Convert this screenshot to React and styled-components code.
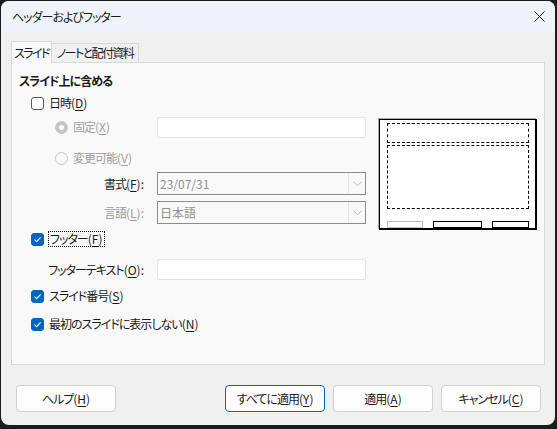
import React from 'react';
import styled, { createGlobalStyle } from 'styled-components';

/* Global ---------------------------*/
const GlobalStyle = createGlobalStyle`
    html, body {
        margin: 0;
        padding: 0;
        background: #1c1c1c;
    }
    body {
        width: 557px;
        height: 429px;
        overflow: hidden;
        font-family: "Noto Sans CJK JP", "Noto Sans", sans-serif;
        font-size: 12px;
        letter-spacing: -1px;
        color: #1b1b1b;
        font-feature-settings: "palt" 1;
    }
    u {
        text-underline-offset: 2px;
        text-decoration-thickness: 1px;
    }
`;

/* Small parts ---------------------------*/
const CheckMark = () => (
    <svg width="9" height="9" viewBox="0 0 9 9">
        <path d="M1.5 4.6 L3.6 6.6 L7.6 2.3" fill="none" stroke="#fff" strokeWidth="1.1" />
    </svg>
);

const CloseIcon = () => (
    <svg width="11" height="11" viewBox="0 0 11 11">
        <path d="M0.5 0.5 L10.5 10.5 M10.5 0.5 L0.5 10.5" stroke="#1b1b1b" strokeWidth="1" />
    </svg>
);

const Chevron = () => (
    <svg width="9" height="6" viewBox="0 0 9 6">
        <path d="M0.5 0.8 L4.5 4.8 L8.5 0.8" fill="none" stroke="#b8b8b8" strokeWidth="1" />
    </svg>
);

const Check = ({ checked }) => (
    <CheckBox $checked={checked}>{checked && <CheckMark />}</CheckBox>
);

const Key = ({ k }) => (
    <Paren>(<u>{k}</u>)</Paren>
);

const App = () => {
    return (
        <>
            <GlobalStyle />
            <Window>
                <TitleBar>
                    <span>ヘッダーおよびフッター</span>
                    <CloseIcon />
                </TitleBar>

                <Body>
                    <Tabs>
                        <Tab $active $w={41}>スライド</Tab>
                        <Tab $w={87}>ノートと配付資料</Tab>
                    </Tabs>

                    <Panel>
                        <FormColumn>
                            <Heading>スライド上に含める</Heading>

                            <CheckRow $mt={2}>
                                <Check checked={false} />
                                <span>日時<Key k="D" /></span>
                            </CheckRow>

                            <FieldRow $mt={3} $h={22}>
                                <RadioCell>
                                    <Radio $selected />
                                    <Muted>固定<Key k="X" /></Muted>
                                </RadioCell>
                                <TextBox $h={21} />
                            </FieldRow>

                            <FieldRow $mt={9} $h={22}>
                                <RadioCell>
                                    <Radio />
                                    <Muted>変更可能<Key k="V" /></Muted>
                                </RadioCell>
                            </FieldRow>

                            <FieldRow $mt={3} $h={23}>
                                <LabelCell>書式<Key k="F" />:</LabelCell>
                                <Select>
                                    <span>23/07/31</span>
                                    <SelectArrow><Chevron /></SelectArrow>
                                </Select>
                            </FieldRow>

                            <FieldRow $mt={6} $h={23}>
                                <LabelCell $muted>言語<Key k="L" />:</LabelCell>
                                <Select>
                                    <span>日本語</span>
                                    <SelectArrow><Chevron /></SelectArrow>
                                </Select>
                            </FieldRow>

                            <CheckRow $mt={5}>
                                <Check checked />
                                <Focus>フッター<Key k="F" /></Focus>
                            </CheckRow>

                            <FieldRow $mt={10} $h={21}>
                                <LabelCell>フッターテキスト<Key k="O" />:</LabelCell>
                                <TextBox $h={21} />
                            </FieldRow>

                            <CheckRow $mt={6}>
                                <Check checked />
                                <span>スライド番号<Key k="S" /></span>
                            </CheckRow>

                            <CheckRow $mt={8}>
                                <Check checked />
                                <span>最初のスライドに表示しない<Key k="N" /></span>
                            </CheckRow>
                        </FormColumn>

                        <Preview>
                            <DashedArea $h={20} />
                            <DashedArea $h={65} />
                            <FooterBoxes>
                                <FooterBox $w={36} $muted />
                                <FooterBox $w={49} />
                                <FooterBox $w={37} />
                            </FooterBoxes>
                        </Preview>
                    </Panel>

                    <ButtonBar>
                        <Button>ヘルプ<Key k="H" /></Button>
                        <Spacer />
                        <Button $default>すべてに適用<Key k="Y" /></Button>
                        <Button>適用<Key k="A" /></Button>
                        <Button>キャンセル<Key k="C" /></Button>
                    </ButtonBar>
                </Body>
            </Window>
        </>
    );
};

export default App;

/* Styles ---------------------------*/
const Window = styled.div`
    margin: 1px 0 0 1px;
    width: 554px;
    height: 424px;
    background: #f0f0f0;
    border-radius: 8px;
    overflow: hidden;
    display: flex;
    flex-direction: column;
`;

const TitleBar = styled.div`
    height: 31px;
    flex: none;
    background: #eef4f9;
    display: flex;
    align-items: center;
    justify-content: space-between;
    padding: 0 10px 0 11px;
    line-height: 16px;
`;

const Body = styled.div`
    display: flex;
    flex-direction: column;
    padding: 9px 10px 0 10px;
`;

const Paren = styled.span`
    letter-spacing: 0;
`;

const Tabs = styled.div`
    display: flex;
    align-items: flex-end;
    height: 22px;
    position: relative;
    z-index: 1;
    margin-bottom: -1px;
`;

const Tab = styled.div`
    width: ${p => p.$w}px;
    height: ${p => (p.$active ? '22px' : '20px')};
    box-sizing: border-box;
    padding-top: ${p => (p.$active ? '3px' : '1px')};
    background: ${p => (p.$active ? '#f9f9f9' : '#f0f0f0')};
    border: 1px solid #d9d9d9;
    border-bottom: ${p => (p.$active ? 'none' : '1px solid #d9d9d9')};
    border-left: ${p => (p.$active ? '1px solid #d9d9d9' : 'none')};
    line-height: 16px;
    letter-spacing: -1.6px;
    text-align: center;
    white-space: nowrap;
`;

const Panel = styled.div`
    height: 303px;
    box-sizing: border-box;
    background: #f9f9f9;
    border: 1px solid #d9d9d9;
    display: flex;
    align-items: flex-start;
`;

const FormColumn = styled.div`
    width: 354px;
    display: flex;
    flex-direction: column;
`;

const Heading = styled.div`
    margin: 8px 0 0 7px;
    height: 20px;
    line-height: 20px;
    font-weight: bold;
`;

const CheckRow = styled.div`
    margin-top: ${p => p.$mt}px;
    height: 20px;
    padding-left: 19px;
    display: flex;
    align-items: center;
    gap: 5px;
    line-height: 16px;
    white-space: nowrap;
`;

const CheckBox = styled.span`
    width: 13px;
    height: 13px;
    box-sizing: border-box;
    border-radius: 3px;
    flex: none;
    display: flex;
    align-items: center;
    justify-content: center;
    background: ${p => (p.$checked ? '#0067c0' : '#ffffff')};
    border: 1px solid ${p => (p.$checked ? '#0067c0' : '#5a5a5a')};
`;

const Focus = styled.span`
    outline: 1px dotted #000;
    outline-offset: 0;
    padding: 0 1px;
    line-height: 14px;
`;

const FieldRow = styled.div`
    margin-top: ${p => p.$mt}px;
    height: ${p => p.$h}px;
    display: flex;
    align-items: center;
    white-space: nowrap;
    line-height: 16px;
`;

const RadioCell = styled.div`
    width: 145px;
    box-sizing: border-box;
    padding-left: 43px;
    display: flex;
    align-items: center;
    gap: 5px;
`;

const Radio = styled.span`
    width: 13px;
    height: 13px;
    box-sizing: border-box;
    border-radius: 50%;
    flex: none;
    background: ${p => (p.$selected ? '#c6c6c6' : '#fafafa')};
    border: 1px solid #c6c6c6;
    display: flex;
    align-items: center;
    justify-content: center;
    &::after {
        content: '';
        width: 5px;
        height: 5px;
        border-radius: 50%;
        background: #ffffff;
        display: ${p => (p.$selected ? 'block' : 'none')};
    }
`;

const Muted = styled.span`
    color: #a0a0a0;
`;

const LabelCell = styled.div`
    width: 145px;
    box-sizing: border-box;
    padding-right: 14px;
    text-align: right;
    color: ${p => (p.$muted ? '#9a9a9a' : '#1b1b1b')};
`;

const TextBox = styled.div`
    width: 209px;
    height: ${p => p.$h}px;
    box-sizing: border-box;
    background: #ffffff;
    border: 1px solid #e3e3e3;
    border-radius: 2px;
`;

const Select = styled.div`
    width: 209px;
    height: 23px;
    box-sizing: border-box;
    background: #f9f9f9;
    border: 1px solid #8c8c8c;
    display: flex;
    align-items: center;
    padding-left: 2px;
    color: #8f8f8f;
    letter-spacing: 0;
    span {
        flex: 1;
    }
`;

const SelectArrow = styled.div`
    width: 17px;
    height: 100%;
    box-sizing: border-box;
    border-left: 1px solid #e6e6e6;
    display: flex;
    align-items: center;
    justify-content: center;
`;

const Preview = styled.div`
    margin: 56px 0 0 13px;
    width: 158px;
    height: 111px;
    box-sizing: border-box;
    background: #ffffff;
    border: 1px solid #000;
    border-right-width: 2px;
    border-bottom-width: 2px;
    box-shadow: -1px -1px 0 #a8a8a8;
    padding: 3px 6px 0 7px;
    display: flex;
    flex-direction: column;
    gap: 2px;
`;

const DashedArea = styled.div`
    height: ${p => p.$h}px;
    box-sizing: border-box;
    border: 1px dashed #000;
`;

const FooterBoxes = styled.div`
    margin-top: 10px;
    display: flex;
    justify-content: space-between;
`;

const FooterBox = styled.div`
    width: ${p => p.$w}px;
    height: 7px;
    box-sizing: border-box;
    border: 1px solid ${p => (p.$muted ? '#c0c0c0' : '#000')};
`;

const ButtonBar = styled.div`
    margin-top: 20px;
    padding: 0 4px 0 5px;
    display: flex;
    gap: 8px;
`;

const Spacer = styled.div`
    flex: 1;
`;

const Button = styled.div`
    width: 100px;
    height: 27px;
    box-sizing: border-box;
    background: #fdfdfd;
    border: 1px solid ${p => (p.$default ? '#0067c0' : '#d0d0d0')};
    border-radius: 4px;
    display: flex;
    align-items: center;
    justify-content: center;
    line-height: 16px;
    white-space: nowrap;
`;
